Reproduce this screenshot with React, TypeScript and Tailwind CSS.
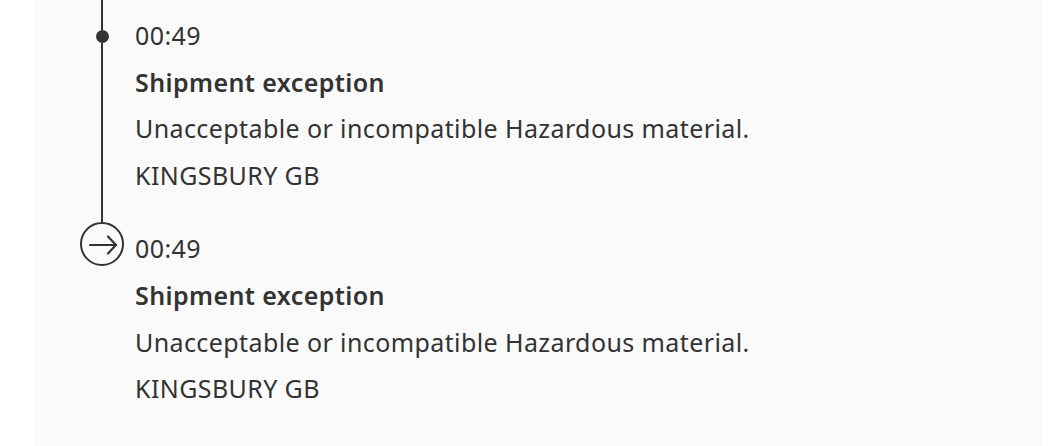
type Event = {
  time: string;
  title: string;
  detail: string;
  location: string;
};

const events: Event[] = [
  {
    time: "00:49",
    title: "Shipment exception",
    detail: "Unacceptable or incompatible Hazardous material.",
    location: "KINGSBURY GB",
  },
  {
    time: "00:49",
    title: "Shipment exception",
    detail: "Unacceptable or incompatible Hazardous material.",
    location: "KINGSBURY GB",
  },
];

function ArrowCircle() {
  return (
    <svg width="44" height="44" viewBox="0 0 44 44" fill="none" stroke="#333333" strokeLinecap="round" strokeLinejoin="round">
      <circle cx="22" cy="22" r="21" strokeWidth="2" />
      <path d="M10 23h26" strokeWidth="2.2" />
      <path d="M28 14.5l8 8.5-8 8.5" strokeWidth="2.2" />
    </svg>
  );
}

export default function App() {
  return (
    <div className="h-[446px] w-[1057px] overflow-hidden bg-white font-['Noto_Sans',sans-serif] text-[#333333]">
      <div className="ml-[35px] h-full w-[1008px] bg-[#fafafa] pl-[45px]">
        {events.map((event, i) => {
          const last = i === events.length - 1;
          return (
            <div key={i} className="flex">
              <div className="flex w-[44px] shrink-0 flex-col items-center">
                {last ? (
                  <>
                    <div className="h-[9px] w-[2px] bg-[#333333]" />
                    <ArrowCircle />
                  </>
                ) : (
                  <>
                    <div className="h-[30px] w-[2px] bg-[#333333]" />
                    <div className="h-[13px] w-[13px] rounded-full bg-[#333333]" />
                    <div className="w-[2px] flex-1 bg-[#333333]" />
                  </>
                )}
              </div>

              <div className="ml-[11px] pb-[14.67px] pt-[12px] text-[25px] leading-[46.67px] tracking-[0.4px]">
                <p>{event.time}</p>
                <p className="font-semibold">{event.title}</p>
                <p>{event.detail}</p>
                <p>{event.location}</p>
              </div>
            </div>
          );
        })}
      </div>
    </div>
  );
}
